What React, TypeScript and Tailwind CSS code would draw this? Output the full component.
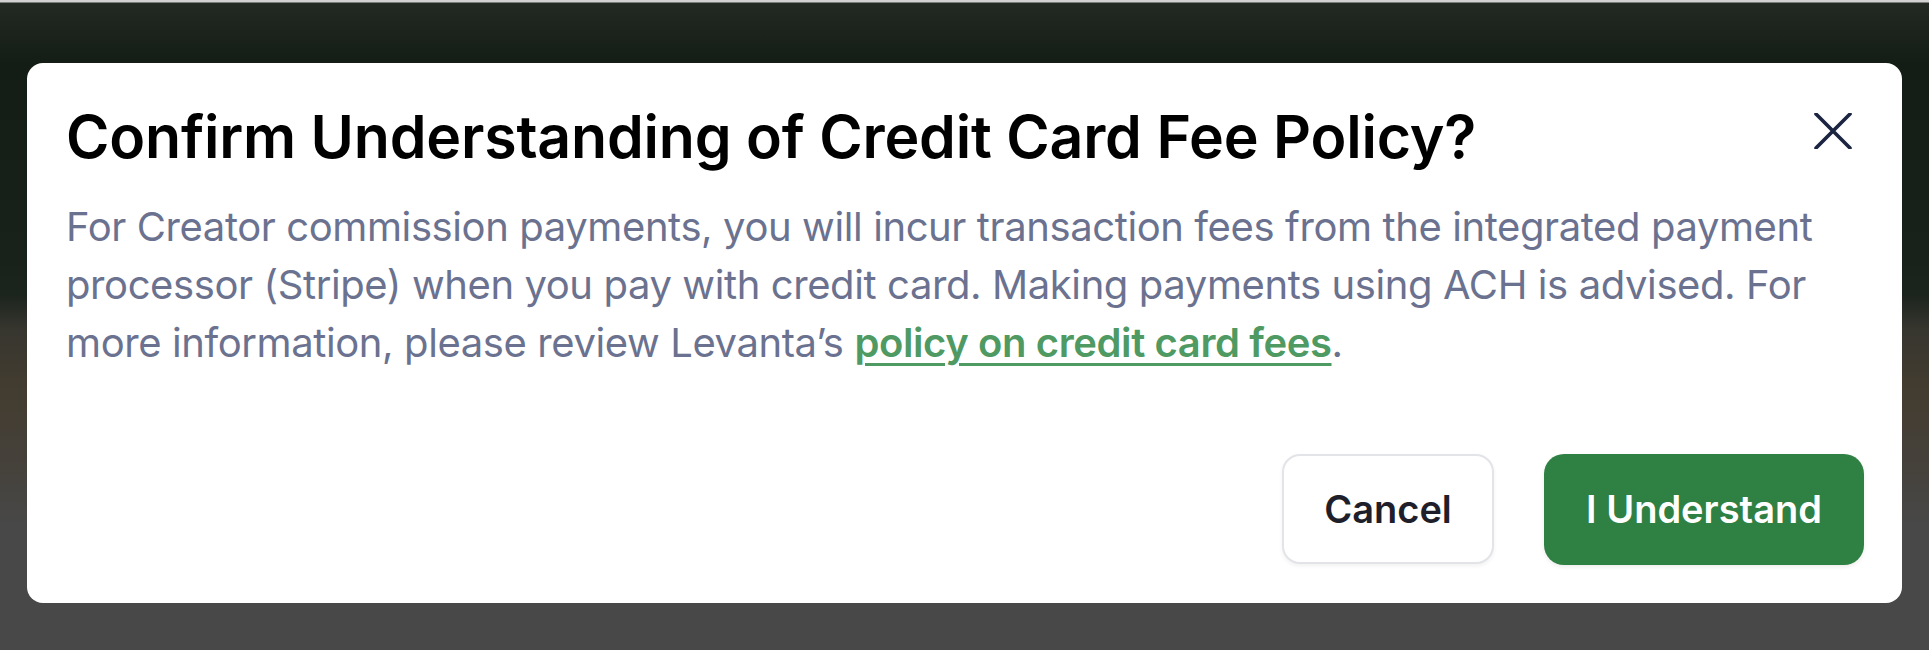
import React from "react";

function CloseIcon() {
  return (
    <svg width="38" height="36" viewBox="0 0 38 36" fill="none" aria-hidden="true">
      <path d="M2 1 L36 35 M36 1 L2 35" stroke="#1b2440" strokeWidth="3.6" strokeLinecap="round" />
    </svg>
  );
}

export default function App() {
  return (
    <div
      className="min-h-[650px] w-full overflow-hidden bg-[linear-gradient(to_bottom,#d2d2d2_0px,#d2d2d2_2px,#232923_3px,#131d15_64px,#18211a_260px,#1c241e_295px,#37362f_330px,#433c30_390px,#45413a_460px,#484848_525px,#484848_650px)] pt-[63px] pl-[27px]"
      style={{ fontFamily: "Inter, 'Noto Sans', sans-serif" }}
    >
      {/* Fee policy confirmation dialog */}
      <div className="flex h-[540px] w-[1875px] flex-col rounded-[16px] bg-white pb-[38px] pl-[39px] pr-[38px] pt-[39px]">
        <div className="flex items-start justify-between">
          <h2 className="text-[59px] font-semibold leading-[70px] tracking-[-0.2px] text-black">
            Confirm Understanding of Credit Card Fee Policy?
          </h2>
          <button className="mr-[12px] mt-[11px]">
            <CloseIcon />
          </button>
        </div>

        <p className="mt-[26px] w-[1800px] text-[40px] leading-[58px] tracking-[-0.4px] text-[#6b7290]">
          For Creator commission payments, you will incur transaction fees from the integrated payment processor
          (Stripe) when you pay with credit card. Making payments using ACH is advised. For more information, please
          review Levanta’s{" "}
          <a href="#" className="font-semibold text-[#4f9a62] underline decoration-[3px] underline-offset-[6px]">
            policy on credit card fees
          </a>
          .
        </p>

        <div className="mt-auto flex justify-end gap-[50px]">
          <button className="h-[110px] w-[212px] rounded-[18px] border-2 border-[#e3e4e8] bg-white text-[38px] font-semibold text-[#1f1f2b] shadow-[0_2px_4px_rgba(0,0,0,0.06)]">
            Cancel
          </button>
          <button className="h-[111px] w-[320px] rounded-[20px] bg-[#2f8043] text-[38px] font-semibold text-white shadow-[0_2px_4px_rgba(0,0,0,0.08)]">
            I Understand
          </button>
        </div>
      </div>
    </div>
  );
}
